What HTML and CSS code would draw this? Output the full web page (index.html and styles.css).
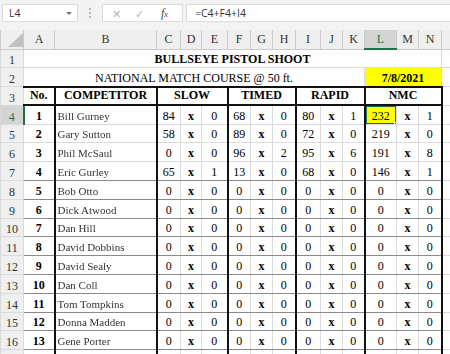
FILE: index.html
```html
<!DOCTYPE html>
<html>
<head>
<meta charset="utf-8">
<link rel="stylesheet" href="styles.css">
</head>
<body>
<div class="toolbar">
  <div class="namebox"><span>L4</span><span class="caret"></span></div>
  <div class="sep"><i></i><i></i><i></i></div>
  <div class="fxbox"><span class="ico cancel">✕</span><span class="ico ok">✓</span><span class="fx">f<span class="fxx">x</span></span></div>
  <div class="formula">=C4+F4+I4</div>
</div>
<table class="sheet">
  <colgroup>
    <col class="c-rh"><col class="c-a"><col class="c-b"><col class="c-c"><col class="c-d"><col class="c-e"><col class="c-f"><col class="c-g"><col class="c-h"><col class="c-i"><col class="c-j"><col class="c-k"><col class="c-l"><col class="c-m"><col class="c-n"><col class="c-o">
  </colgroup>
  <thead>
    <tr class="colhdr">
      <th class="corner"><svg width="15" height="14" viewBox="0 0 15 14"><polygon points="15,0 15,14 0,14" fill="#c2c2c2"/></svg></th>
      <th>A</th><th>B</th><th>C</th><th>D</th><th>E</th><th>F</th><th>G</th><th>H</th><th>I</th><th>J</th><th>K</th><th class="csel">L</th><th>M</th><th>N</th><th></th>
    </tr>
  </thead>
  <tbody>
    <tr><th class="rh">1</th><td colspan="14" class="title">BULLSEYE PISTOL SHOOT</td><td class="o"></td></tr>
    <tr><th class="rh">2</th><td colspan="11" class="sub">NATIONAL MATCH COURSE @ 50 ft.</td><td colspan="3" class="date">7/8/2021</td><td class="o"></td></tr>
    <tr class="hdr"><th class="rh">3</th><td class="b">No.</td><td class="b tl">COMPETITOR</td><td colspan="3" class="b tl">SLOW</td><td colspan="3" class="b tl">TIMED</td><td colspan="3" class="b tl">RAPID</td><td colspan="3" class="b tl tr">NMC</td><td class="o"></td></tr>
    <tr><th class="rh rsel">4</th><td class="b">1</td><td class="nm tl"><span>Bill Gurney</span></td><td class="tl">84</td><td class="b">x</td><td>0</td><td class="tl">68</td><td class="b">x</td><td>0</td><td class="tl">80</td><td class="b">x</td><td>1</td><td class="tl sel">232<span class="selbox"><i></i></span></td><td class="b">x</td><td class="tr">1</td><td class="o"></td></tr>
    <tr><th class="rh">5</th><td class="b">2</td><td class="nm tl"><span>Gary Sutton</span></td><td class="tl">58</td><td class="b">x</td><td>0</td><td class="tl">89</td><td class="b">x</td><td>0</td><td class="tl">72</td><td class="b">x</td><td>0</td><td class="tl">219</td><td class="b">x</td><td class="tr">0</td><td class="o"></td></tr>
    <tr><th class="rh">6</th><td class="b">3</td><td class="nm tl"><span>Phil McSaul</span></td><td class="tl">0</td><td class="b">x</td><td>0</td><td class="tl">96</td><td class="b">x</td><td>2</td><td class="tl">95</td><td class="b">x</td><td>6</td><td class="tl">191</td><td class="b">x</td><td class="tr">8</td><td class="o"></td></tr>
    <tr class="bd"><th class="rh">7</th><td class="b">4</td><td class="nm tl"><span>Eric Gurley</span></td><td class="tl">65</td><td class="b">x</td><td>1</td><td class="tl">13</td><td class="b">x</td><td>0</td><td class="tl">68</td><td class="b">x</td><td>0</td><td class="tl">146</td><td class="b">x</td><td class="tr">1</td><td class="o"></td></tr>
    <tr class="bd"><th class="rh">8</th><td class="b">5</td><td class="nm tl"><span>Bob Otto</span></td><td class="tl">0</td><td class="b">x</td><td>0</td><td class="tl">0</td><td class="b">x</td><td>0</td><td class="tl">0</td><td class="b">x</td><td>0</td><td class="tl">0</td><td class="b">x</td><td class="tr">0</td><td class="o"></td></tr>
    <tr class="bd"><th class="rh">9</th><td class="b">6</td><td class="nm tl"><span>Dick Atwood</span></td><td class="tl">0</td><td class="b">x</td><td>0</td><td class="tl">0</td><td class="b">x</td><td>0</td><td class="tl">0</td><td class="b">x</td><td>0</td><td class="tl">0</td><td class="b">x</td><td class="tr">0</td><td class="o"></td></tr>
    <tr class="bd"><th class="rh">10</th><td class="b">7</td><td class="nm tl"><span>Dan Hill</span></td><td class="tl">0</td><td class="b">x</td><td>0</td><td class="tl">0</td><td class="b">x</td><td>0</td><td class="tl">0</td><td class="b">x</td><td>0</td><td class="tl">0</td><td class="b">x</td><td class="tr">0</td><td class="o"></td></tr>
    <tr class="bd"><th class="rh">11</th><td class="b">8</td><td class="nm tl"><span>David Dobbins</span></td><td class="tl">0</td><td class="b">x</td><td>0</td><td class="tl">0</td><td class="b">x</td><td>0</td><td class="tl">0</td><td class="b">x</td><td>0</td><td class="tl">0</td><td class="b">x</td><td class="tr">0</td><td class="o"></td></tr>
    <tr class="bd"><th class="rh">12</th><td class="b">9</td><td class="nm tl"><span>David Sealy</span></td><td class="tl">0</td><td class="b">x</td><td>0</td><td class="tl">0</td><td class="b">x</td><td>0</td><td class="tl">0</td><td class="b">x</td><td>0</td><td class="tl">0</td><td class="b">x</td><td class="tr">0</td><td class="o"></td></tr>
    <tr class="bd"><th class="rh">13</th><td class="b">10</td><td class="nm tl"><span>Dan Coll</span></td><td class="tl">0</td><td class="b">x</td><td>0</td><td class="tl">0</td><td class="b">x</td><td>0</td><td class="tl">0</td><td class="b">x</td><td>0</td><td class="tl">0</td><td class="b">x</td><td class="tr">0</td><td class="o"></td></tr>
    <tr class="bd"><th class="rh">14</th><td class="b">11</td><td class="nm tl"><span>Tom Tompkins</span></td><td class="tl">0</td><td class="b">x</td><td>0</td><td class="tl">0</td><td class="b">x</td><td>0</td><td class="tl">0</td><td class="b">x</td><td>0</td><td class="tl">0</td><td class="b">x</td><td class="tr">0</td><td class="o"></td></tr>
    <tr class="bd"><th class="rh">15</th><td class="b">12</td><td class="nm tl"><span>Donna Madden</span></td><td class="tl">0</td><td class="b">x</td><td>0</td><td class="tl">0</td><td class="b">x</td><td>0</td><td class="tl">0</td><td class="b">x</td><td>0</td><td class="tl">0</td><td class="b">x</td><td class="tr">0</td><td class="o"></td></tr>
    <tr class="bd"><th class="rh">16</th><td class="b">13</td><td class="nm tl"><span>Gene Porter</span></td><td class="tl">0</td><td class="b">x</td><td>0</td><td class="tl">0</td><td class="b">x</td><td>0</td><td class="tl">0</td><td class="b">x</td><td>0</td><td class="tl">0</td><td class="b">x</td><td class="tr">0</td><td class="o"></td></tr>
    <tr class="bd"><th class="rh"></th><td></td><td class="tl"></td><td class="tl"></td><td></td><td></td><td class="tl"></td><td></td><td></td><td class="tl"></td><td></td><td></td><td class="tl"></td><td></td><td class="tr"></td><td class="o"></td></tr>
  </tbody>
</table>
</body>
</html>
```
FILE: styles.css
```css
* { box-sizing: border-box; }
html, body { margin: 0; padding: 0; }
body {
  width: 450px;
  height: 354px;
  overflow: hidden;
  background: #fff;
  font-family: "Liberation Serif", "Times New Roman", serif;
  color: #000;
}

/* ---------- formula bar ---------- */
.toolbar {
  height: 30px;
  background: #f3f3f3;
  display: flex;
  align-items: flex-start;
  padding: 4px 0 0 2px;
  font-family: "Open Sans", "Liberation Sans", sans-serif;
  font-size: 10.5px;
  color: #333;
}
.namebox {
  width: 76px;
  height: 18px;
  background: #fff;
  border: 1px solid #dcdcdc;
  display: flex;
  align-items: center;
  justify-content: space-between;
  padding: 0 5px 0 6px;
}
.caret {
  width: 0; height: 0;
  border-left: 3px solid transparent;
  border-right: 3px solid transparent;
  border-top: 3px solid #777;
}
.sep {
  width: 24px;
  height: 18px;
  display: flex;
  flex-direction: column;
  align-items: center;
  justify-content: center;
  gap: 2px;
}
.sep i { width: 2px; height: 2px; background: #b8b8b8; }
.fxbox {
  width: 81px;
  height: 18px;
  background: #fff;
  border: 1px solid #dcdcdc;
  display: flex;
  align-items: center;
}
.ico { color: #b4b4b4; font-size: 11px; line-height: 1; }
.cancel { margin-left: 9px; }
.ok { margin-left: 14px; }
.fx {
  margin-left: 17px;
  font-family: "Liberation Serif", serif;
  font-style: italic;
  font-size: 12px;
  color: #444;
}
.fxx { font-size: 8px; }
.formula {
  flex: 1;
  margin-left: 3px;
  height: 18px;
  background: #fff;
  border: 1px solid #dcdcdc;
  border-right: none;
  padding-left: 8px;
  display: flex;
  align-items: center;
}

/* ---------- sheet ---------- */
.sheet {
  border-collapse: collapse;
  table-layout: fixed;
  width: 471px;
}
.c-rh { width: 23px; }
.c-a { width: 31px; }
.c-b { width: 102px; }
.c-c { width: 24px; }
.c-d { width: 21px; }
.c-e { width: 26px; }
.c-f { width: 23px; }
.c-g { width: 22px; }
.c-h { width: 23px; }
.c-i { width: 25px; }
.c-j { width: 22px; }
.c-k { width: 22px; }
.c-l { width: 32px; }
.c-m { width: 22px; }
.c-n { width: 23px; }
.c-o { width: 30px; }

.sheet th, .sheet td {
  padding: 0;
  border: 1px solid #dadada;
  font-size: 12px;
  line-height: 14px;
  text-align: center;
  vertical-align: bottom;
  white-space: nowrap;
  overflow: hidden;
}
.sheet td { padding-bottom: 1px; }

.colhdr th {
  height: 19px;
  background: #efefef;
  border-color: #cacaca;
  border-top: none;
  font-weight: normal;
  color: #333;
  vertical-align: middle;
}
.corner svg { display: block; margin: 2px 0 0 7px; }
.colhdr .csel {
  background: #d4d4d4;
  color: #217346;
  border-bottom: 2px solid #217346;
}
tbody tr { height: 18.8px; }
.rh {
  background: #efefef;
  border-color: #cacaca;
  font-weight: normal;
  color: #333;
  vertical-align: middle;
}
.rh.rsel {
  background: #d4d4d4;
  color: #217346;
  border-right: 2px solid #217346;
}

.b { font-weight: bold; }
.title { font-weight: bold; vertical-align: middle; }
.sub { vertical-align: middle; }
.date {
  background: #ffff00;
  font-weight: bold;
  border: 2px solid #111;
  vertical-align: middle;
}
.hdr td { border-top: 2px solid #111; border-bottom: 2px solid #111; vertical-align: middle; }
.hdr td.o { border-top-color: #dadada; border-top-width: 1px; border-bottom-width: 1px; border-bottom-color: #dadada; }
.tl { border-left: 2px solid #111 !important; }
.tr { border-right: 2px solid #111 !important; }
.bd td { border-bottom: 1px solid #8a8a8a; }
.bd td.o { border-bottom-color: #dadada; }

.sheet td.nm { text-align: left; padding-left: 2px; }
.nm span {
  display: inline-block;
  font-size: 11px;
  color: #333;
  filter: blur(0.7px);
}

.sel {
  background: #ffff00;
  position: relative;
  overflow: visible;
}
.selbox {
  position: absolute;
  left: -1px; top: -1px; right: -1px; bottom: -1px;
  border: 2px solid #217346;
}
.selbox i {
  position: absolute;
  right: -4px;
  bottom: -4px;
  width: 5px;
  height: 5px;
  background: #217346;
  border: 1px solid #fff;
}
```
